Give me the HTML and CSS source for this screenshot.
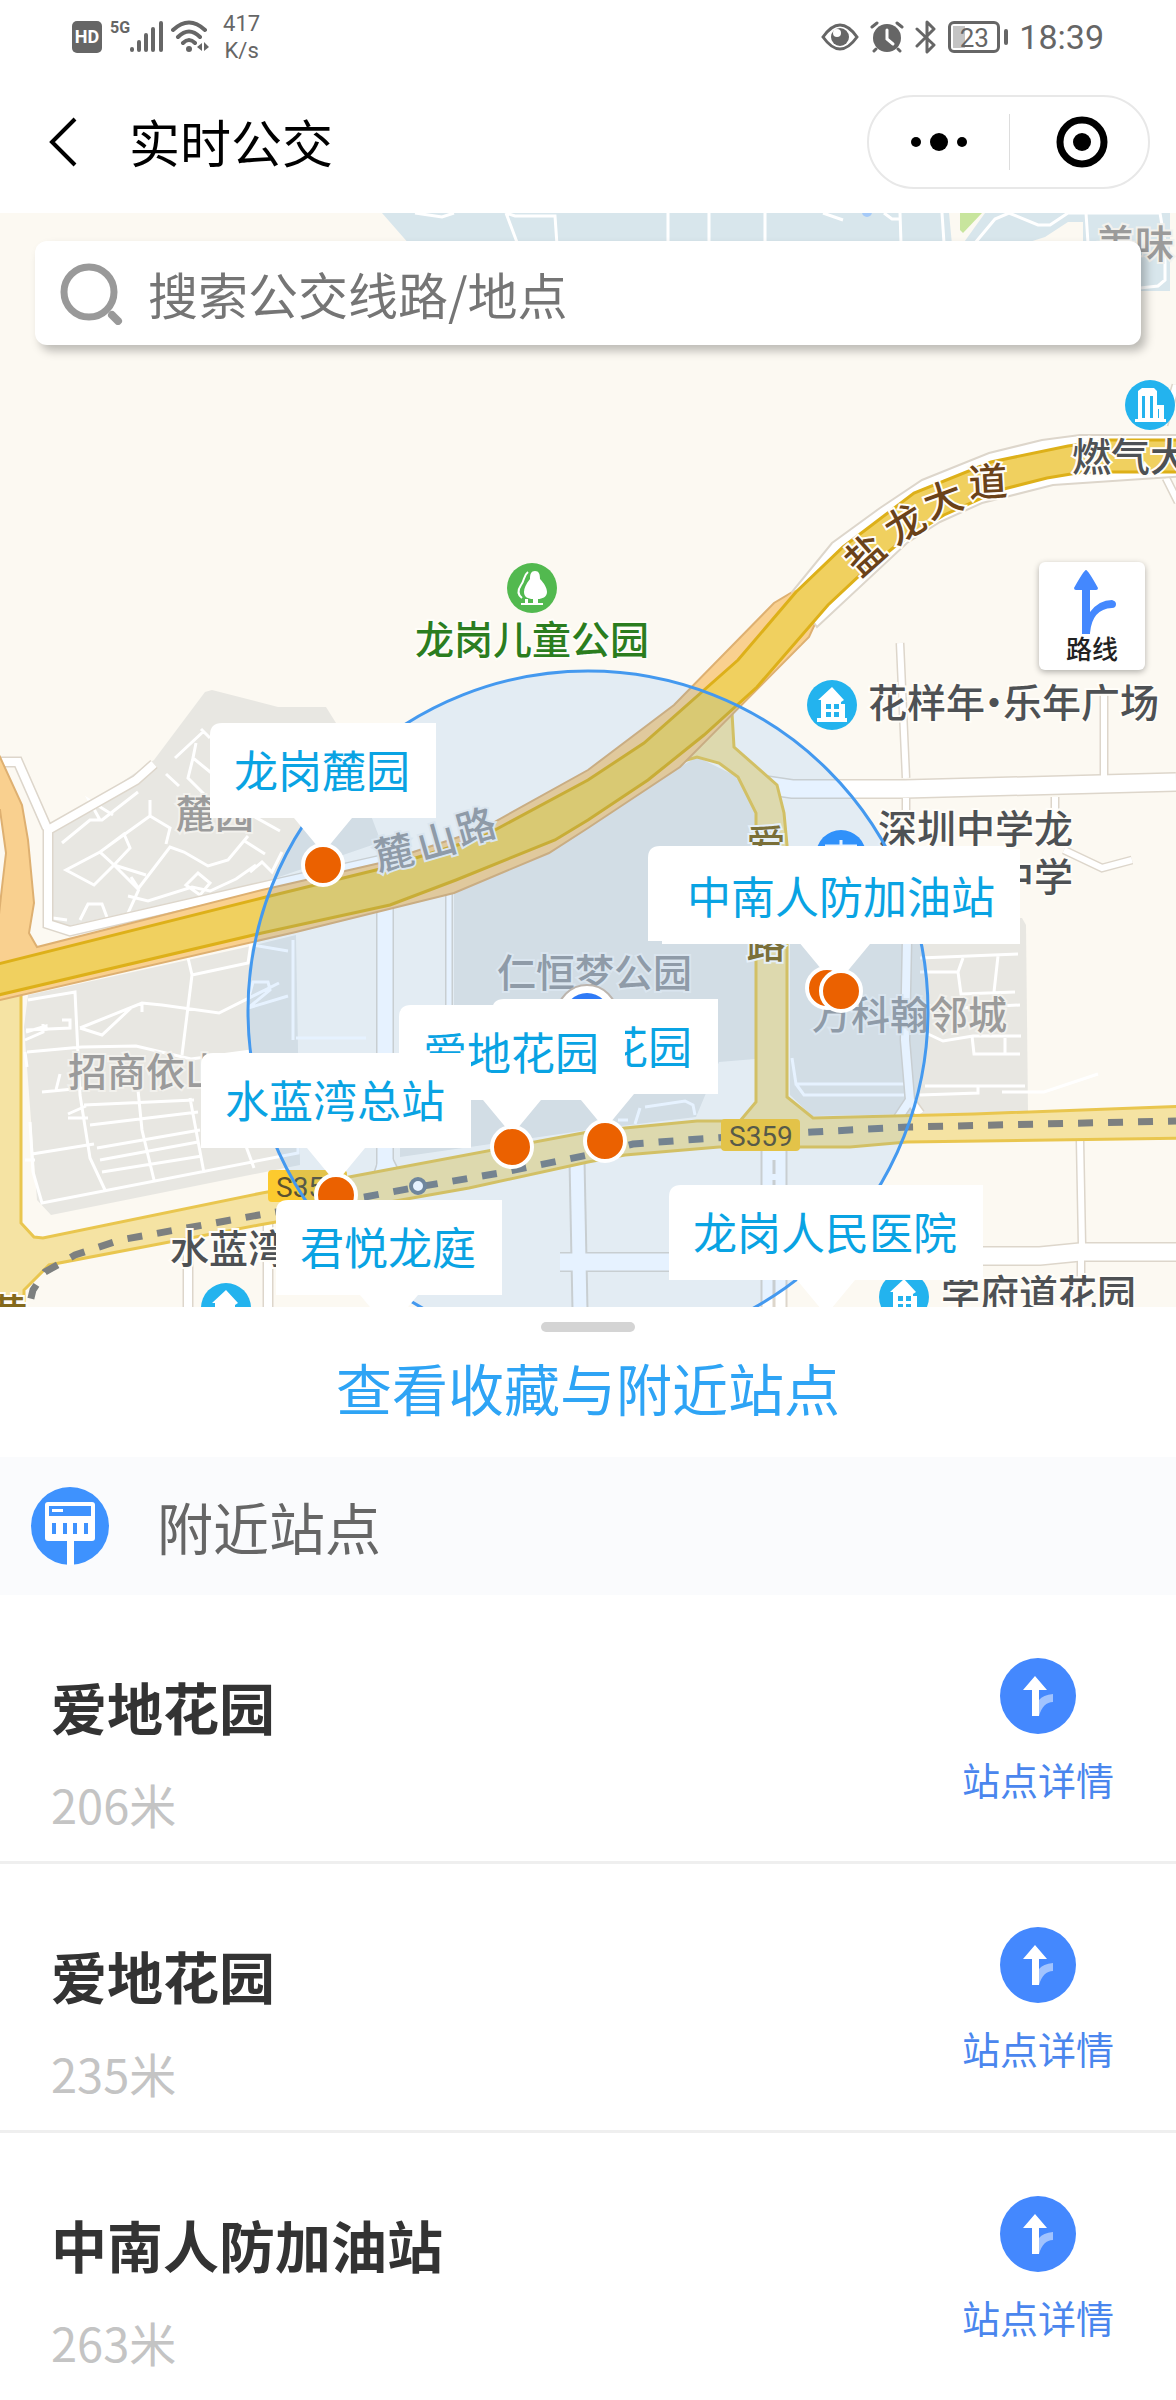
FILE: index.html
```html
<!DOCTYPE html>
<html lang="zh-CN">
<head>
<meta charset="utf-8">
<meta name="viewport" content="width=device-width, initial-scale=1">
<title>实时公交</title>
<link rel="stylesheet" href="styles.css">
</head>
<body>
<header>
  <div class="status">
    <span class="hd">HD</span>
    <span class="signal">
      <span class="gen">5G</span>
      <svg width="33" height="32" viewBox="0 0 33 32" stroke="#666" stroke-width="4" stroke-linecap="round"><path d="M2 28v1M9 21v8M16 14v15M23 8v21M31 2v27"/></svg>
    </span>
    <svg class="wifi" width="40" height="34" viewBox="0 0 40 34" fill="none" stroke="#666" stroke-width="4" stroke-linecap="round"><path d="M2 10Q18-5 34 10M7 17Q18 6 29 17M12 23Q18 17 24 23"/><circle cx="18" cy="29" r="3" fill="#666" stroke="none"/><path d="M31 23v8l-5-4zM33 22v9l5-4z" fill="#666" stroke="none"/></svg>
    <span class="speed">417<br>K/s</span>
    <span class="status-right">
      <svg width="38" height="28" viewBox="0 0 38 28"><path d="M2 14Q19-10 36 14Q19 38 2 14Z" fill="none" stroke="#666" stroke-width="3"/><circle cx="19" cy="14" r="9" fill="#666"/><circle cx="16" cy="10" r="4" fill="#fff"/></svg>
      <svg width="34" height="32" viewBox="0 0 34 32" fill="none" stroke="#666" stroke-width="3" stroke-linecap="round"><circle cx="17" cy="17" r="14" fill="#666" stroke="none"/><path d="M2 6l5-4M32 6l-5-4M6 28l-2 2M28 28l2 2"/><path d="M17 9v9l6 5" stroke="#fff"/></svg>
      <svg width="22" height="34" viewBox="0 0 22 34" fill="none" stroke="#666" stroke-width="3" stroke-linejoin="round" stroke-linecap="round"><path d="M2 9l17 16-7 7V2l7 7L2 26"/></svg>
      <span class="battery"><b></b><i>23</i></span>
      <span class="clock">18:39</span>
    </span>
  </div>
  <div class="nav">
    <button class="back" type="button" aria-label="返回"><svg width="28" height="50" viewBox="0 0 28 50" fill="none" stroke="#000" stroke-width="4"><path d="M26 2L3 25l23 23"/></svg></button>
    <h1>实时公交</h1>
    <div class="capsule">
      <button type="button" aria-label="更多"><svg width="56" height="20" viewBox="0 0 56 20"><circle cx="5" cy="10" r="5"/><circle cx="28" cy="10" r="9"/><circle cx="51" cy="10" r="5"/></svg></button>
      <button type="button" aria-label="关闭"><svg width="52" height="52" viewBox="0 0 52 52"><circle cx="26" cy="26" r="22" fill="none" stroke="#000" stroke-width="7"/><circle cx="26" cy="26" r="9"/></svg></button>
    </div>
  </div>
</header>
<main>
<section class="map" aria-label="地图">
<svg class="canvas" viewBox="0 213 1176 1094">
  <defs>
    <g id="house"><circle r="25" fill="#23b3ee"/><path d="M0-18L-14-5h3v18h-4v4h30v-4h-2V-1h-4v-2l3-2z" fill="#fff"/><path d="M-6-1h5v5h-5zM2-1h5v5H2zM-6 7h5v5h-5zM2 7h5v5H2z" fill="#23b3ee"/></g>
  </defs>
  <g fill="#d8e6ec">
    <path d="M382 213H949L952 245H410Z"/>
    <path d="M985 213H1170V291H1083V222H1068L1045 237L1020 245H962Z"/>
  </g>
  <path d="M960 213h22l-19 20-3-3z" fill="#c8e59d"/>
  <circle cx="867" cy="212" r="5" fill="#a5caf8"/>
  <path class="lane" d="M415 213l27 4 12-4M506 213l12 32M506 213l9 3h40l2 29M668 213v30M709 213v30M765 213v30M823 213l20 7M884 213l8 6h8M900 213l1 30M942 213l2 30M975 243l20-24 14-6 29 12h12l18-12h92l5 30v37l-7 6-18 2M1086 213l2 30"/>
  <g fill="#e8e7e2">
    <path d="M48 833L154 760L205 692L212 690L278 707H326L336 723L381 842L270 880L65 927L50 918Z"/>
    <path d="M28 995L247 947L296 935L300 1165L51 1215L37 1200L24 1027Z"/>
    <path d="M454 892L549 853L588 828L680 767L697 757L738 777L755 813V1059L719 1062L696 1117L588 1130L400 1157V1010H454Z"/>
    <path d="M790 918H1022L1026 925L1028 1112L812 1116L790 1095Z"/>
  </g>
  <path class="lane" d="M175 758l29-27M201 729l9 9M196 743l-3 15 27 22M193 758l-5 20 18 18M166 774l13 12M138 792l-36 28h-12L62 843M100 820l-11-20 24 15M150 800v16l-50 36-34 18 28 15 20-20-14-13 24-18 6 14-16 17 24 24 32-42 14 5 24 14 20-6 20-24M150 816l20 12-4 16M114 865l32 10M139 889l-11 24M139 889l-8-12M80 920l8-16h14l6 16M128 896l20 5 44-14 18 4 26-12 20-14M186 885l12-12 12 10-10 12zM250 872l12-10 10 10 10-20M230 803l50 28M53 918l14 2M243 840l22 14"/>
  <path class="lane" d="M28 1000l47-8 5 103 10 63 15 32M188 958l4 17-10 80M192 975l56-12 3-20M80 1028l62-25 20 2 57 8 60-30M142 1003v9M80 1028l22 7 30-28M27 1052l55-5 54-1 55 13 60-8M26 1032l20-6v5M62 1020h8v8l-44 2M25 1040l18-8v-8M248 1000l5-18 15 0 2 8-22 18 40-12M293 940v100M253 945l35 6M296 1038h70M42 1092l42-4M68 1118h20M68 1114l18-8M60 1074l-4 16M84 1105l110-5M90 1125l108-13M97 1148l103-18M100 1160l98-18M102 1172l100-16M137 1080l5 50 12 50M190 1098l14 75M32 1154l62-10M30 1122l3 50 9 31 256-50V1125M25 1052l2 15M25 1160h10M240 1130l14 38"/>
  <path class="lane" d="M920 958l98-4M920 972h38l5-14M958 972l3 22 54-2M998 956l-4 36M920 1010l100-5M928 1034l15 7 30-5h48M972 1036l2 18h46M1005 1038v16M925 1086h100M978 1086v7l-58 2M792 1058l4 26 108 0M796 1084l8 11h100M1002 1092h42l54-18M645 1107l40-6 8 4 2 10M628 1120h-10M640 1108l-5 16"/>
  <g class="minor-edge">
    <path d="M0 762h18l29 66M154 764l-18 16-88 50v94l22 7 200-46 115-26" stroke-width="11"/>
    <path d="M385 905V1180" stroke-width="18"/><path d="M385 1150l-10 30M385 1150l15 30" stroke-width="8"/>
    <path d="M449 890V1020" stroke-width="8"/>
    <path d="M765 785L792 789H905L1176 782" stroke-width="20"/>
    <path d="M900 643l6 135M1104 690v88M906 798v22M1055 797v20M1064 850l38 18 30-8M1080 1140l2 105M1081 1260v25M1166 478l12 24M1176 385l-12 40" stroke-width="9"/>
    <path d="M907 940l-2 100 5 60-12 18M910 1100l10 14" stroke-width="11"/>
    <path d="M970 1256h70l40-4h96M560 1262h120" stroke-width="20"/>
    <path d="M774 1150V1310" stroke-width="27"/>
    <path d="M577 1160l3 150" stroke-width="17"/>
    <path d="M188 1250v60M268 1220v90" stroke-width="11"/>
  </g>
  <g class="minor">
    <path d="M0 762h18l29 66M154 764l-18 16-88 50v94l22 7 200-46 115-26" stroke-width="8"/>
    <path d="M385 905V1180" stroke-width="15"/><path d="M385 1150l-10 30M385 1150l15 30" stroke-width="5"/>
    <path d="M449 890V1020" stroke-width="5"/>
    <path d="M765 785L792 789H905L1176 782" stroke-width="17"/>
    <path d="M900 643l6 135M1104 690v88M906 798v22M1055 797v20M1064 850l38 18 30-8M1080 1140l2 105M1081 1260v25M1166 478l12 24M1176 385l-12 40" stroke-width="6"/>
    <path d="M907 940l-2 100 5 60-12 18M910 1100l10 14" stroke-width="8"/>
    <path d="M970 1256h70l40-4h96M560 1262h120" stroke-width="17"/>
    <path d="M774 1150V1310" stroke-width="23"/>
    <path d="M577 1160l3 150" stroke-width="13"/>
    <path d="M188 1250v60M268 1220v90" stroke-width="8"/>
  </g>
  <path d="M774 1160V1310" stroke="#ddd6cb" stroke-width="3" stroke-dasharray="14 6 200"/>
  <path class="second" d="M732 713L734 747L777 785L784 813L787 845V1097L813 1118L974 1114L1186 1106V1138L907 1142L850 1147H719L625 1155L588 1162L469 1188L259 1225L49 1265L24 1290V1320H-10V990H21V1223L34 1237L43 1238L262 1193L349 1177L588 1132L625 1128L697 1121H740L756 1102V813L738 777L719 763L697 757L670 765L690 720Z"/>
  <path d="M1176 1121L908 1127L812 1132L700 1139L633 1144L588 1155L500 1173L418 1187L365 1197L270 1213L120 1240L75 1255L45 1272L33 1290L28 1310" fill="none" stroke="#7d8080" stroke-width="7" stroke-dasharray="15 15" stroke-dashoffset="7"/>
  <circle cx="418" cy="1186" r="7" fill="#fff" stroke="#77838f" stroke-width="4"/>
  <path class="ramp" d="M-6 745L0 757L22 805L28 840L34 903L29 933L37 947L262 890L380 863L480 830L588 770L674 705L774 603L796 590L828 605L820 613L809 637L680 767L588 828L549 853L454 893L296 932L0 1000H-6V960L2 887L6 853L0 810H-6Z"/>
  <path d="M792 592L832 543L880 508L922 480L989 453L1042 440L1080 435H1186V476L1053 485L982 503L940 522L907 543L817 627Z" fill="#fff" stroke="#ddd6cb" stroke-width="2"/>
  <path d="M765 615L795 590L825 606L800 645Z" fill="#f9d08f"/>
  <path class="trunk" d="M-6 965L262 898L380 869L480 838L588 780L644 743L738 660L796 592L843 547L914 493L991 462L1068 446L1110 440H1186V472H1083L1047 478L1000 490L944 515L899 543L858 577L828 605L757 687L704 735L648 780L588 820L555 840L456 880L390 905L262 933L-6 996Z"/>

  <rect x="268" y="1170" width="79" height="32" rx="4" class="shield"/><text x="276" y="1197" class="shield-text">S359</text>
  <rect x="721" y="1119" width="79" height="32" rx="4" class="shield"/><text x="729" y="1146" class="shield-text">S359</text>
  <g transform="translate(841 855)"><circle r="25" fill="#2f90fa"/><path d="M-16-9h32M0-15v6" stroke="#fff" stroke-width="3"/></g>

  <g class="label faint">
    <text x="1096" y="258">美味</text>
    <text x="176" y="828">麓园</text>
    <text x="68" y="1086">招商依山</text>
    <text x="497" y="987">仁恒梦公园</text>
    <text x="812" y="1029">万科翰邻城</text>
  </g>
  <g class="label faint centered">
    <text transform="translate(394 853) rotate(-13)" y="14">麓</text>
    <text transform="translate(437 842) rotate(-16)" y="14">山</text>
    <text transform="translate(476 827) rotate(-16)" y="14">路</text>
  </g>
  <g class="label olive centered">
    <text x="766" y="858">爱</text><text x="766" y="958">路</text><text x="8" y="1327">黄</text>
  </g>
  <g class="label brown centered">
    <text transform="translate(865 555) rotate(-42)" y="14">盐</text>
    <text transform="translate(905 524) rotate(-32)" y="14">龙</text>
    <text transform="translate(943 500) rotate(-20)" y="14">大</text>
    <text transform="translate(988 482) rotate(-3)" y="14">道</text>
  </g>
  <g class="label">
    <text x="1072" y="471">燃气大</text>
    <text x="868" y="717">花样年</text><text class="dot" x="994" y="717">·</text><text x="1003" y="717">乐年广场</text>
    <text x="878" y="843">深圳中学龙</text>
    <text x="995" y="891">中学</text>
    <text x="170" y="1263">水蓝湾</text>
    <text x="941" y="1308">学府道花园</text>
  </g>
  <text class="label green" x="415" y="654">龙岗儿童公园</text>

  <circle cx="588" cy="1011" r="340" fill="#3f9bff" fill-opacity=".13" stroke="#4499ef" stroke-width="3"/>

  <g transform="translate(532 588)"><circle r="25" fill="#52b94f"/><path d="M3-17c4 0 5 3 5 8 4 4 7 9 7 13 0 5-5 7-9 7v4h5v2h-22v-2h4V11h3v4h5v-4c-5 0-9-2-9-7 0-4 2-8 6-13 0-5 1-8 5-8z" fill="#fff"/><path d="M-4-16c-5 4-3 8-7 13-4 6-3 10 1 13" fill="none" stroke="#fff" stroke-width="2"/></g>
  <g transform="translate(1150 405)"><circle r="25" fill="#23b3ee"/><path d="M-12-14l4-3H4l3 3V0h7v14h2v3h-31v-3h3z" fill="#fff"/><path d="M-8-9h3v22h-3zM0-9h3v22H0zM8 4h1v9H8z" fill="#23b3ee"/></g>
  <use href="#house" x="832" y="705"/>
  <use href="#house" x="226" y="1308"/>
  <use href="#house" x="904" y="1297"/>
  <g><circle cx="587" cy="1015" r="30" fill="#fff" stroke="#bcb5ae" stroke-width="2"/><circle cx="587" cy="1016" r="23" fill="#2f7af6"/></g>

  <g class="stop" transform="translate(210 723)"><path d="M0 95V12Q0 0 12 0H226V95H142L113 130L84 95Z"/><circle cx="113" cy="142" r="20"/><text x="24" y="65">龙岗麓园</text></g>
  <g class="stop" transform="translate(648 846)"><path d="M0 95V12Q0 0 12 0H358V95H208L179 130L150 95Z"/><circle cx="179" cy="142" r="20"/></g>
  <g class="stop" transform="translate(662 849)"><path d="M0 95V12Q0 0 12 0H358V95H208L179 130L150 95Z"/><circle cx="179" cy="142" r="20"/><text x="25" y="65">中南人防加油站</text></g>
  <g class="stop" transform="translate(492 999)"><path d="M0 95V12Q0 0 12 0H226V95H142L113 130L84 95Z"/><circle cx="113" cy="142" r="20"/><text x="24" y="65">爱地花园</text></g>
  <g class="stop" transform="translate(399 1005)"><path d="M0 95V12Q0 0 12 0H226V95H142L113 130L84 95Z"/><circle cx="113" cy="142" r="20"/><text x="24" y="65">爱地花园</text></g>
  <g class="stop" transform="translate(201 1053)"><path d="M0 95V12Q0 0 12 0H270V95H164L135 130L106 95Z"/><circle cx="135" cy="142" r="20"/><text x="24" y="65">水蓝湾总站</text></g>
  <g class="stop" transform="translate(276 1200)"><path d="M0 95V12Q0 0 12 0H226V95H142L113 130L84 95Z"/><text x="24" y="65">君悦龙庭</text></g>
  <g class="stop" transform="translate(669 1185)"><path d="M0 95V12Q0 0 12 0H314V95H186L157 130L128 95Z"/><text x="24" y="65">龙岗人民医院</text></g>
</svg>
  <label class="search">
    <svg width="64" height="64" viewBox="0 0 64 64" fill="none" stroke="#999" stroke-width="7"><circle cx="30" cy="31" r="25"/><path d="M53 54l6 6" stroke-width="8" stroke-linecap="round"/></svg>
    <input type="text" placeholder="搜索公交线路/地点" aria-label="搜索公交线路/地点">
  </label>
  <button class="route" type="button">
    <svg width="48" height="64" viewBox="0 0 48 64"><path d="M18 0Q20 0 30 18Q30 20 28 20H22V42Q31 30 44 30Q48 31 48 34Q48 38 44 38Q24 39 22 63V64H14V20H8Q6 20 6 18Q16 0 18 0Z" fill="#4488fe"/></svg>
    路线
  </button>
</section>
<section class="sheet">
  <button class="expand" type="button"><span class="grip"></span>查看收藏与附近站点</button>
  <h2>
    <svg width="78" height="78" viewBox="0 0 78 78"><circle cx="39" cy="39" r="39" fill="#3e92fe"/><rect x="14" y="15" width="50" height="39" rx="3" fill="#fff"/><path d="M36 50h7v28h-7z" fill="#fff"/><path d="M18 19h42v10H18zM21 36h4v11h-4zM32 36h4v11h-4zM42 36h4v11h-4zM53 36h4v11h-4z" fill="#3e92fe"/><path d="M21 22h11v3H21z" fill="#fff"/></svg>
    附近站点
  </h2>
  <ul class="stations">
    <li><div><h3>爱地花园</h3><p>206米</p></div><a href="#"><svg width="76" height="76" viewBox="0 0 76 76"><circle cx="38" cy="38" r="38" fill="#4488fe"/><path d="M39 42Q43 37 53 36V44Q43 44 39 58Z" fill="#a1c3fe"/><path d="M35 18L47 32H39V58H32V32H23Z" fill="#fff"/></svg>站点详情</a></li>
    <li><div><h3>爱地花园</h3><p>235米</p></div><a href="#"><svg width="76" height="76" viewBox="0 0 76 76"><circle cx="38" cy="38" r="38" fill="#4488fe"/><path d="M39 42Q43 37 53 36V44Q43 44 39 58Z" fill="#a1c3fe"/><path d="M35 18L47 32H39V58H32V32H23Z" fill="#fff"/></svg>站点详情</a></li>
    <li><div><h3>中南人防加油站</h3><p>263米</p></div><a href="#"><svg width="76" height="76" viewBox="0 0 76 76"><circle cx="38" cy="38" r="38" fill="#4488fe"/><path d="M39 42Q43 37 53 36V44Q43 44 39 58Z" fill="#a1c3fe"/><path d="M35 18L47 32H39V58H32V32H23Z" fill="#fff"/></svg>站点详情</a></li>
  </ul>
</section>
</main>
</body>
</html>
```
FILE: styles.css
```css
* { box-sizing: border-box; margin: 0; padding: 0; }
body {
  background: #fff;
  color: #333;
  font-family: "Noto Sans CJK SC", sans-serif;
  overflow-x: hidden;
}
svg { display: block; flex: none; }
button, input { font: inherit; border: 0; background: none; }

.status {
  display: flex;
  align-items: center;
  height: 73px;
  padding: 0 72px;
  color: #666;
  font-family: Roboto, sans-serif;
}
.hd {
  width: 30px;
  border-radius: 5px;
  background: #666;
  color: #fff;
  font-size: 18px;
  font-weight: 700;
  line-height: 32px;
  text-align: center;
}
.signal { display: flex; align-items: flex-start; margin-left: 8px; }
.gen { font-size: 16px; font-weight: 700; line-height: 14px; }
.wifi { margin-left: 8px; }
.speed { margin-left: 12px; font-size: 22px; line-height: 27px; text-align: center; }
.status-right { display: flex; align-items: center; gap: 11px; margin-left: auto; }
.battery {
  position: relative;
  width: 52px;
  height: 32px;
  margin-right: 8px;
  border: 3px solid #666;
  border-radius: 6px;
}
.battery::after {
  content: "";
  position: absolute;
  top: 5px;
  right: -11px;
  width: 4px;
  height: 16px;
  border-radius: 2px;
  background: #666;
}
.battery b { position: absolute; top: 2px; left: 2px; width: 12px; height: 22px; background: #c4c4c4; }
.battery i { position: absolute; inset: 0; font-size: 26px; font-style: normal; line-height: 28px; text-align: center; }
.clock { font-size: 34px; line-height: 40px; }

.nav { display: flex; align-items: center; height: 140px; padding: 0 26px 2px 49px; }
.back { display: flex; }
.nav h1 { margin-left: 52px; padding-bottom: 2px; color: #000; font-size: 51px; font-weight: 400; line-height: 60px; }
.capsule {
  display: flex;
  width: 283px;
  height: 94px;
  margin-left: auto;
  border: 2px solid #e8e8e8;
  border-radius: 47px;
}
.capsule button { display: flex; flex: 1; align-items: center; justify-content: center; }
.capsule button + button::before { content: ""; width: 1px; height: 56px; margin-right: 46px; background: #ddd; }
.capsule button + button { justify-content: flex-start; }

.map { position: relative; overflow: hidden; background: #fcf9f2; }
.canvas { width: 100%; height: auto; }
.lane { fill: none; stroke: #fff; stroke-width: 3; }
.minor, .minor-edge { fill: none; stroke: #fff; }
.minor-edge { stroke: #ddd6cb; }
.second { fill: #f5e3a3; stroke: #e9c64f; stroke-width: 3; }
.ramp { fill: #f9d08f; stroke: #deb071; stroke-width: 2; }
.trunk { fill: #f0d05f; stroke: #ddb019; stroke-width: 3; }
.shield { fill: #fcca2e; }
.shield-text { fill: #5b512e; font-family: Roboto, sans-serif; font-size: 28px; }
.label { fill: #4e5154; stroke: #fffdf8; stroke-width: 4; paint-order: stroke; font-size: 39px; font-weight: 500; }
.label .dot { text-anchor: middle; }
.centered { text-anchor: middle; }
.faint { fill: #9b9b9b; stroke: #f2f1ed; }
.olive { fill: #84691b; }
.brown { fill: #6b4218; }
.green { fill: #2b7d1f; }
.stop path { fill: #fff; }
.stop circle { fill: #eb6100; stroke: #fff; stroke-width: 4; }
.stop text { fill: #09a3e3; font-size: 44px; }

.search {
  position: absolute;
  top: 28px;
  left: 35px;
  right: 35px;
  display: flex;
  align-items: center;
  gap: 25px;
  height: 104px;
  padding: 0 24px;
  border-radius: 12px;
  background: #fff;
  box-shadow: 5px 6px 10px rgba(0, 0, 0, .25);
}
.search input { flex: 1; min-width: 0; outline: 0; font-size: 50px; line-height: 72px; }
.search input::placeholder { color: #757575; opacity: 1; }
.route {
  position: absolute;
  top: 349px;
  right: 31px;
  display: flex;
  flex-direction: column;
  align-items: center;
  width: 106px;
  height: 108px;
  padding-top: 8px;
  border-radius: 6px;
  background: #fff;
  box-shadow: 0 2px 6px rgba(0, 0, 0, .3);
  color: #222;
  font-size: 26px;
  font-weight: 500;
  line-height: 28px;
}

.expand {
  display: flex;
  flex-direction: column;
  align-items: center;
  width: 100%;
  height: 150px;
  padding-top: 15px;
  color: #2ea4f5;
  font-size: 56px;
  line-height: 80px;
}
.grip { width: 94px; height: 10px; margin-bottom: 15px; border-radius: 5px; background: #d4d4d4; }
.sheet h2 {
  display: flex;
  align-items: center;
  gap: 48px;
  height: 138px;
  padding: 0 31px;
  background: #fafbfd;
  color: #666;
  font-size: 56px;
  font-weight: 400;
  line-height: 80px;
}
.stations { list-style: none; }
.stations li {
  display: flex;
  align-items: flex-start;
  justify-content: space-between;
  height: 269px;
  padding: 63px 62px 0 51px;
  border-bottom: 3px solid #efefef;
}
.stations li:last-child { border-bottom: 0; }
.stations h3 { margin-top: 8px; font-size: 56px; font-weight: 700; line-height: 80px; }
.stations p { margin-top: 24px; color: #c4c4c4; font-size: 47px; line-height: 68px; }
.stations a {
  display: flex;
  flex-direction: column;
  align-items: center;
  gap: 20px;
  color: #4a86ee;
  font-size: 38px;
  line-height: 50px;
  text-decoration: none;
}
```
